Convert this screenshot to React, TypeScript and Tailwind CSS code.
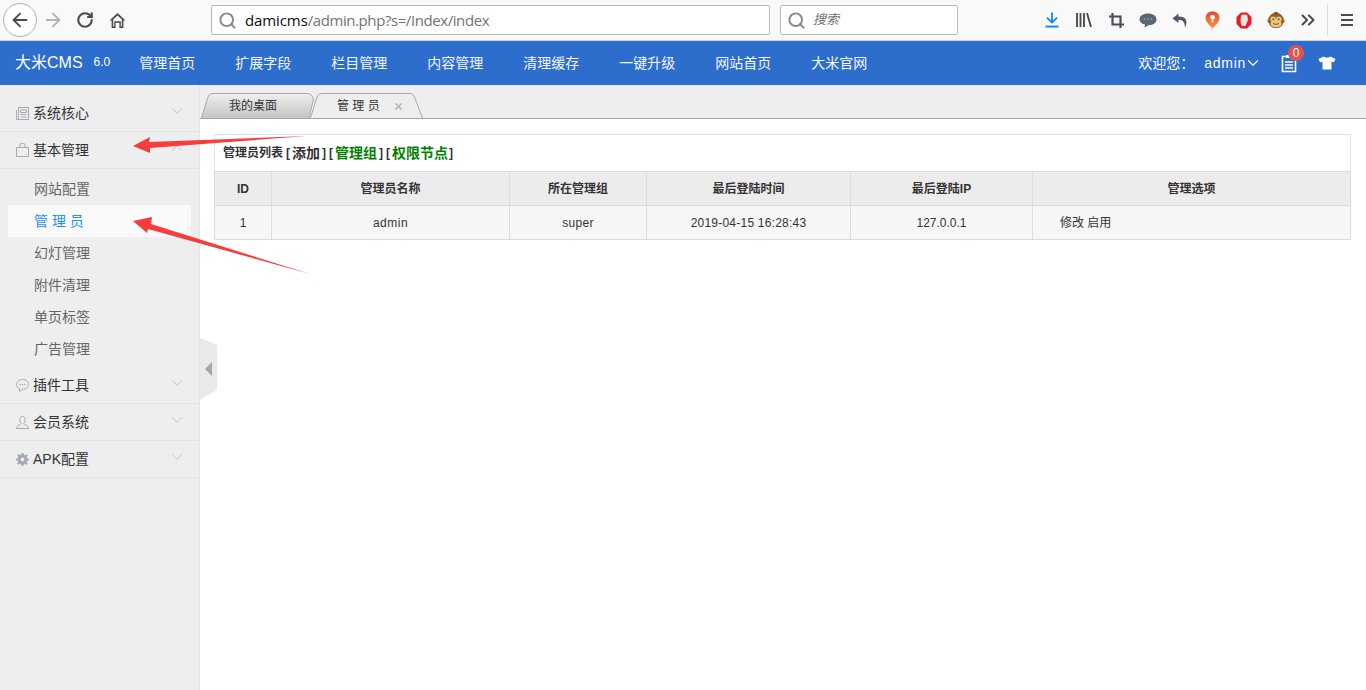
import React from "react";
import { ArrowLeft, ArrowRight, RotateCw, Search, ChevronDown, ChevronUp, ChevronsRight, X } from "lucide-react";

const font = "font-['Liberation_Sans','Noto_Sans_CJK_SC',sans-serif]";

function ToolIcon({ children }: { children: React.ReactNode }) {
  return <div className="w-8 h-8 flex items-center justify-center shrink-0">{children}</div>;
}

function BrowserBar() {
  return (
    <div className="h-[41px] bg-[#f9f9fa] border-b border-[#d4d4d6] flex items-center pl-[3px] shrink-0">
      <div className="w-[34px] h-[34px] rounded-full border border-[#b1b1b3] bg-white flex items-center justify-center shrink-0">
        <ArrowLeft size={22} strokeWidth={2.1} color="#4a4a4f" />
      </div>
      <div className="w-8 h-8 flex items-center justify-center shrink-0"><ArrowRight size={22} strokeWidth={2} color="#b4b4b6" /></div>
      <ToolIcon><RotateCw size={18} strokeWidth={2.8} color="#4a4a4f" /></ToolIcon>
      <ToolIcon>
        <svg width="17" height="17" viewBox="0 0 17 17">
          <path d="M8.5 1 L16.5 8.6 L14.4 8.6 V16 H10.4 V10.8 H6.6 V16 H2.6 V8.6 H0.5 Z M4.2 7.4 V14.5 H5.2 V9.3 H11.8 V14.5 H12.8 V7.4 L8.5 3.4 Z" fill="#4a4a4f" fillRule="evenodd" />
        </svg>
      </ToolIcon>
      <div className="ml-[78px] w-[559px] h-[30px] bg-white border border-[#b9b9bb] rounded-[2px] flex items-center pl-[6px] shrink-0">
        <Search size={19} strokeWidth={2.5} color="#8a8a8c" />
        <span className="ml-[8px] text-[15px] text-[#0c0c0d] font-['Open_Sans',sans-serif] tracking-[-0.1px]">
          damicms<span className="text-[#737373] tracking-[-0.42px]">/admin.php?s=/Index/index</span>
        </span>
      </div>
      <div className="ml-[10px] w-[178px] h-[30px] bg-white border border-[#b9b9bb] rounded-[2px] flex items-center pl-[6px] shrink-0">
        <Search size={19} strokeWidth={2.5} color="#8a8a8c" />
        <span className={`ml-[7px] text-[13px] italic text-[#6f6f6f] ${font}`}>搜索</span>
      </div>
      <div className="ml-[78px] flex shrink-0">
        <ToolIcon>
          <svg width="14" height="16" viewBox="0 0 14 16">
            <path d="M7 0.5 V10 M2 5.6 L7 10.6 L12 5.6" stroke="#0a84ff" strokeWidth="1.8" fill="none" />
            <rect x="0.5" y="13.6" width="13" height="1.9" fill="#0a84ff" />
          </svg>
        </ToolIcon>
        <ToolIcon>
          <svg width="16" height="14" viewBox="0 0 16 14">
            <path d="M1 0 V14 M4.5 0 V14 M8 0 V14 M11 0 L15 14" stroke="#4a4a4f" strokeWidth="1.9" fill="none" />
          </svg>
        </ToolIcon>
        <ToolIcon>
          <svg width="15" height="15" viewBox="0 0 15 15">
            <path d="M3.5 0 V11.5 H15 M0 3.5 H11.5 V15" stroke="#4a4f58" strokeWidth="2.2" fill="none" />
          </svg>
        </ToolIcon>
        <ToolIcon>
          <svg width="18" height="15" viewBox="0 0 18 15">
            <path d="M9 0.5 C14 0.5 17.5 3 17.5 6.5 C17.5 10 14 12 10 12 L5.5 14.5 L6 11.6 C2.8 11 0.5 9 0.5 6.5 C0.5 3 4 0.5 9 0.5 Z" fill="#5a6672" />
            <circle cx="5.5" cy="6" r="1" fill="#8e99a3" /><circle cx="9" cy="6" r="1" fill="#8e99a3" /><circle cx="12.5" cy="6" r="1" fill="#8e99a3" />
          </svg>
        </ToolIcon>
        <ToolIcon>
          <svg width="16" height="15" viewBox="0 0 16 15">
            <path d="M6.5 0.5 L0.5 5.5 L6.5 10 V7 C10 6.8 12.6 8 13 14.5 C15.5 10 15.8 3.4 6.5 3.4 Z" fill="#525c66" />
          </svg>
        </ToolIcon>
        <ToolIcon>
          <svg width="15" height="18" viewBox="0 0 15 18">
            <defs><linearGradient id="pin" x1="0" y1="0" x2="0" y2="1"><stop offset="0" stopColor="#e8433a" /><stop offset="1" stopColor="#f79a3e" /></linearGradient></defs>
            <path d="M7.5 0.5 C11.6 0.5 14.5 3.2 14.5 7 C14.5 10.5 10.5 14.5 7.5 17.5 C4.5 14.5 0.5 10.5 0.5 7 C0.5 3.2 3.4 0.5 7.5 0.5 Z" fill="url(#pin)" />
            <circle cx="7.5" cy="6.2" r="2.4" fill="#fff" />
            <rect x="6.8" y="7.5" width="1.4" height="4" fill="#fff" />
          </svg>
        </ToolIcon>
        <ToolIcon>
          <svg width="16" height="17" viewBox="0 0 16 17">
            <path d="M5 0.5 H11 L15.5 5 V12 L11 16.5 H5 L0.5 12 V5 Z" fill="#ec1c24" />
            <path d="M5.5 3 C8 2 11 2.4 11.3 3.6 L12 8 L9.5 14 H7 C5.6 14 4.6 12 4.6 9 C4.6 7 4.8 4.5 5.5 3 Z" fill="#e6e6e6" />
          </svg>
        </ToolIcon>
        <ToolIcon>
          <svg width="18" height="18" viewBox="0 0 18 18">
            <circle cx="2.2" cy="10" r="2" fill="#c98a3c" /><circle cx="15.8" cy="10" r="2" fill="#c98a3c" />
            <circle cx="9" cy="9.5" r="7.8" fill="#9a5f1f" />
            <path d="M6.5 2 Q9 0 11.5 2 L10 3 H8 Z" fill="#7a4a16" />
            <ellipse cx="6.2" cy="8.2" rx="2.8" ry="2.8" fill="#eec58a" /><ellipse cx="11.8" cy="8.2" rx="2.8" ry="2.8" fill="#eec58a" />
            <ellipse cx="9" cy="12.6" rx="5.4" ry="3.6" fill="#eec58a" />
            <circle cx="6.4" cy="8.2" r="1" fill="#2f7a2f" /><circle cx="11.6" cy="8.2" r="1" fill="#2f7a2f" />
            <path d="M6 12.5 Q9 14.4 12 12.5" stroke="#8f4a22" strokeWidth="1" fill="none" />
          </svg>
        </ToolIcon>
        <ToolIcon><ChevronsRight size={22} strokeWidth={2.2} color="#4a4a4f" /></ToolIcon>
      </div>
      <div className="ml-[3px] w-px h-[32px] bg-[#dcdcdd] shrink-0" />
      <div className="ml-[3px] shrink-0"><ToolIcon>
        <svg width="12" height="12" viewBox="0 0 12 12"><path d="M0 1 H12 M0 6 H12 M0 11 H12" stroke="#4a4a4f" strokeWidth="1.9" /></svg>
      </ToolIcon></div>
    </div>
  );
}

function Header() {
  const nav = ["管理首页", "扩展字段", "栏目管理", "内容管理", "清理缓存", "一键升级", "网站首页", "大米官网"];
  return (
    <div className={`h-[44px] bg-[#2d6dcc] flex items-center text-white pl-[15px] pr-[30px] shrink-0 ${font}`}>
      <span className="text-[16px] leading-[44px]">大米CMS</span>
      <span className="ml-[11px] text-[12px] relative -top-px">6.0</span>
      <nav className="ml-[29px] flex gap-10 text-[14px] text-[#f4f7fc]">
        {nav.map((n) => <span key={n}>{n}</span>)}
      </nav>
      <div className="ml-auto flex items-center">
        <span className="text-[14px] w-[66px]">欢迎您：</span>
        <span className="text-[14px] tracking-[0.7px]">admin</span>
        <ChevronDown size={18} strokeWidth={1.6} className="ml-[-2px]" />
        <div className="relative ml-[18px] w-[18px] h-[20px]">
          <svg width="18" height="20" viewBox="0 0 18 20">
            <path d="M2.5 3.5 H15.5 V18.5 H2.5 Z" stroke="#fff" strokeWidth="1.6" fill="none" />
            <path d="M6 2 H12 V5 H6 Z" fill="#fff" />
            <path d="M5 9 H13 M5 12 H13 M5 15 H13" stroke="#fff" strokeWidth="1.4" />
          </svg>
          <span className={`absolute -top-[8px] left-[8px] w-4 h-4 rounded-full bg-[#e2524e] text-[12px] leading-4 text-center ${font}`}>0</span>
        </div>
        <svg width="18" height="14" viewBox="0 0 18 14" className="ml-[20px]">
          <path d="M5.5 0.5 Q9 2.8 12.5 0.5 L17.5 3 L15.8 6.4 L13.5 5.6 V13.5 H4.5 V5.6 L2.2 6.4 L0.5 3 Z" fill="#fff" />
        </svg>
      </div>
    </div>
  );
}

function Group({ icon, label, open, h = 37, pushed }: { icon: React.ReactNode; label: string; open?: boolean; h?: number; pushed?: boolean }) {
  return (
    <div
      className={`flex items-center pl-[15px] pr-[13px] text-[14px] text-[#333] border-b border-[#e4e4e4] ${pushed ? "pt-[2px]" : ""}`}
      style={{ height: h }}
    >
      <span className="w-[14px] h-[14px] flex items-center justify-center">{icon}</span>
      <span className="ml-[4px]">{label}</span>
      <span className="ml-auto relative -top-[2px]">
        {open ? <ChevronUp size={18} strokeWidth={1} color="#b4b4b4" /> : <ChevronDown size={18} strokeWidth={1} color="#b4b4b4" />}
      </span>
    </div>
  );
}

function Sidebar() {
  const c = "#a5a9b1";
  return (
    <aside className={`w-[200px] shrink-0 bg-[#eeeeee] border-r border-[#e4e4e4] pt-[10px] ${font}`}>
      <Group h={37} label="系统核心" icon={
        <svg width="13" height="13" viewBox="0 0 13 13"><rect x="2.5" y="0.5" width="10" height="12" fill="none" stroke={c} /><path d="M0.5 3 V12.5 H3 M4.5 3 H10.5 V5.5 H4.5 Z M4.5 7.5 H10.5 M4.5 10 H10.5" fill="none" stroke={c} /></svg>
      } />
      <Group h={37} label="基本管理" open icon={
        <svg width="13" height="14" viewBox="0 0 13 14"><path d="M0.5 4.5 H12.5 V13.5 H0.5 Z M4 4.5 V1.8 Q4 0.5 5.5 0.5 H7.5 Q9 0.5 9 1.8 V4.5" fill="none" stroke={c} /></svg>
      } />
      <div className="text-[14px] text-[#666] pt-[4px] px-2">
        {["网站配置", "管 理 员", "幻灯管理", "附件清理", "单页标签", "广告管理"].map((t, i) => (
          <div key={t} className={`h-[32px] flex items-center pl-[26px] ${i === 1 ? "bg-[#fafafa] text-[#1e90ff]" : ""}`}>{t}</div>
        ))}
      </div>
      <Group h={39} pushed label="插件工具" icon={
        <svg width="13" height="13" viewBox="0 0 13 13"><path d="M6.5 0.5 C10 0.5 12.5 2.7 12.5 5.5 C12.5 8.3 10 10.3 6.5 10.3 L3.5 12.5 L3.8 9.8 C1.8 9 0.5 7.4 0.5 5.5 C0.5 2.7 3 0.5 6.5 0.5 Z" fill="none" stroke={c} /><circle cx="4" cy="5.5" r="0.8" fill={c} /><circle cx="6.5" cy="5.5" r="0.8" fill={c} /><circle cx="9" cy="5.5" r="0.8" fill={c} /></svg>
      } />
      <Group h={37} label="会员系统" icon={
        <svg width="13" height="13" viewBox="0 0 13 13"><path d="M6.5 0.5 C8.2 0.5 9.2 1.7 9.2 3.6 C9.2 5.6 8.4 6.6 7.8 7.4 C7.8 8.6 12.5 9.3 12.5 12.5 H0.5 C0.5 9.3 5.2 8.6 5.2 7.4 C4.6 6.6 3.8 5.6 3.8 3.6 C3.8 1.7 4.8 0.5 6.5 0.5 Z" fill="none" stroke={c} /></svg>
      } />
      <Group h={37} label="APK配置" icon={
        <svg width="13" height="13" viewBox="0 0 13 13"><circle cx="6.5" cy="6.5" r="3.4" fill="none" stroke={c} strokeWidth="3" /><path d="M6.5 0 V2 M6.5 11 V13 M0 6.5 H2 M11 6.5 H13 M1.9 1.9 L3.3 3.3 M9.7 9.7 L11.1 11.1 M1.9 11.1 L3.3 9.7 M9.7 3.3 L11.1 1.9" stroke={c} strokeWidth="2.2" /></svg>
      } />
    </aside>
  );
}

function Tabs() {
  return (
    <div className={`h-[34px] bg-[#eeeef0] border-b border-[#a8a8a8] flex items-end pl-px text-[12px] text-[#333] ${font}`}>
      <div className="relative w-[114px] h-[25px] flex items-center justify-center pr-[10px] pt-[1px]">
        <svg className="absolute inset-0" width="114" height="25" viewBox="0 0 114 25">
          <defs><linearGradient id="tab" x1="0" y1="0" x2="0" y2="1"><stop offset="0" stopColor="#f0f0f0" /><stop offset="1" stopColor="#c4c4c4" /></linearGradient></defs>
          <path d="M0.5 25 L7 4 Q8 0.5 12 0.5 H107 Q110 0.5 111.5 4 L112.5 6 L108 25" fill="url(#tab)" stroke="#a8a8a8" />
        </svg>
        <span className="relative">我的桌面</span>
      </div>
      <div className="relative -ml-[5px] w-[113px] h-[25px] flex items-center pl-[27px] pt-[1px]">
        <svg className="absolute inset-0" width="113" height="25" viewBox="0 0 113 25">
          <path d="M0.5 25 L7 4 Q8 0.5 12 0.5 H100 Q103 0.5 104.5 4 L112.5 25" fill="#eeeef0" stroke="#a8a8a8" />
          <rect x="1" y="24" width="111" height="1" fill="#eeeef0" />
        </svg>
        <span className="relative">管 理 员</span>
        <X size={11} strokeWidth={3} color="#b0b0b0" className="relative ml-[13px]" />
      </div>
    </div>
  );
}

function Content() {
  const cols = [57, 238, 137, 204, 182, 318];
  const heads = ["ID", "管理员名称", "所在管理组", "最后登陆时间", "最后登陆IP", "管理选项"];
  const vals: [string, string][] = [
    ["1", ""],
    ["admin", "tracking-[0.5px]"],
    ["super", "tracking-[0.25px]"],
    ["2019-04-15 16:28:43", "tracking-[0.22px]"],
    ["127.0.0.1", ""],
  ];
  return (
    <div className={`px-[14px] pt-[15px] ${font}`}>
      <div className="w-[1137px] border border-b-0 border-[#e2e2e2] h-[37px] flex items-center pl-[8px] text-[12px] font-bold text-[#333]">
        <span>管理员列表</span>
        <span className="ml-[3px]">[</span>
        <span className="ml-[2px] text-[14px]">添加</span>
        <span className="ml-[2px]">]</span>
        <span className="ml-[3px]">[</span>
        <span className="ml-[2px] text-[14px] text-[#008000]">管理组</span>
        <span className="ml-[2px]">]</span>
        <span className="ml-[3px]">[</span>
        <span className="ml-[2px] text-[14px] text-[#008000]">权限节点</span>
        <span className="ml-[1px]">]</span>
      </div>
      <table className="w-[1136px] table-fixed border-collapse text-[12px] text-[#333]">
        <colgroup>{cols.map((w, i) => <col key={i} style={{ width: w }} />)}</colgroup>
        <thead>
          <tr className="h-[34px] bg-[#ececec]">
            {heads.map((h) => <th key={h} className="border border-[#dcdcdc] font-bold p-0">{h}</th>)}
          </tr>
        </thead>
        <tbody>
          <tr className="h-[34px] bg-[#f6f6f6]">
            {vals.map(([v, t]) => <td key={v} className={`border border-[#dcdcdc] text-center p-0 ${t}`}>{v}</td>)}
            <td className="border border-[#dcdcdc] p-0 pl-[27px]">修改 启用</td>
          </tr>
        </tbody>
      </table>
    </div>
  );
}

export default function App() {
  return (
    <div className="relative w-[1366px] h-[690px] overflow-hidden bg-white flex flex-col">
      <BrowserBar />
      <Header />
      <div className="flex flex-1 min-h-0">
        <Sidebar />
        <main className="flex-1 min-w-0">
          <Tabs />
          <Content />
        </main>
      </div>
      <svg className="absolute left-[200px] top-[338px]" width="18" height="62" viewBox="0 0 18 62">
        <path d="M0 0 L17 7 V52 L0 62 Z" fill="#e9e9e9" />
        <path d="M5 24 L12 17 V31 Z" transform="translate(0 7)" fill="#a6a6a6" />
      </svg>
      <svg className="absolute left-0 top-0 pointer-events-none" width="400" height="300" viewBox="0 0 400 300">
        <polygon points="133,146 150,137 149,142 307,136 150,148 150,153" fill="#f63c3c" />
        <polygon points="133,221 152,217 151,224 310,274 148,229 147,233" fill="#f63c3c" />
      </svg>
    </div>
  );
}
